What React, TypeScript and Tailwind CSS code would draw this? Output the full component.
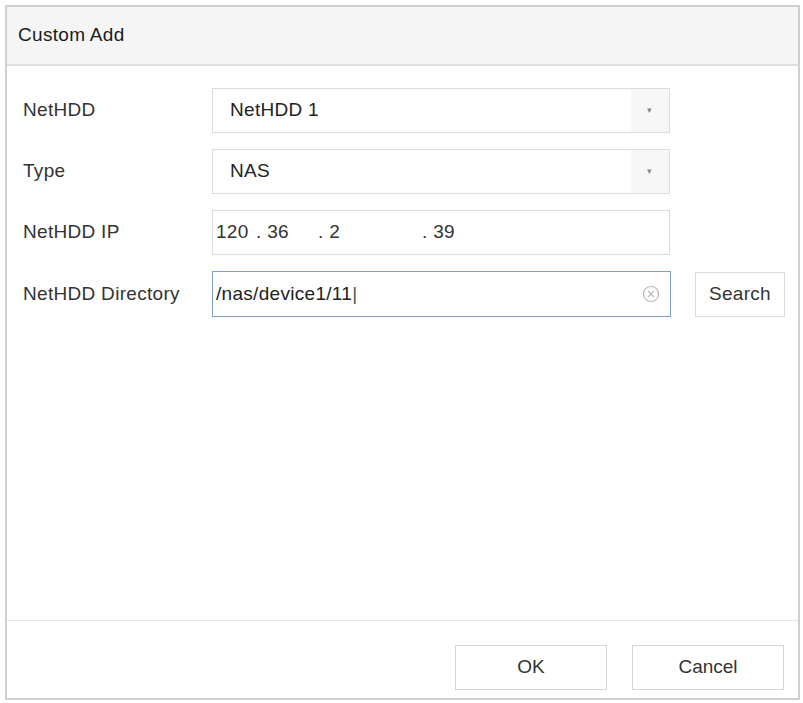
export default function App() {
  const font = { fontFamily: '"Liberation Sans", Arial, sans-serif' };
  const Select = ({ value }: { value: string }) => (
    <div className="flex h-[45px] w-[458px] items-stretch border border-[#dcdcdc] bg-white">
      <span className="flex-1 self-center pl-[17px] text-[19px] tracking-[0.3px] text-[#222]">{value}</span>
      <span className="flex w-[38px] items-center justify-center bg-[#f7f7f7] text-[9px] text-[#888]">▾</span>
    </div>
  );
  return (
    <div style={font} className="h-[703px] w-[803px] bg-white pl-[5px] pr-[3px] pt-[5px] pb-[3px]">
      <div className="flex h-full flex-col border-2 border-[#cfcfcf]">
        <div className="flex h-[59px] items-center border-b-2 border-[#dedede] bg-[#f5f5f5] pl-[11px] text-[19px] tracking-[0.3px] text-[#1a1a1a]">
          Custom Add
        </div>
        <div className="flex flex-1 flex-col gap-[16px] pt-[22px] pl-[16px] text-[19px] tracking-[0.3px] text-[#333]">
          <div className="flex items-center">
            <span className="w-[189px]">NetHDD</span>
            <Select value="NetHDD 1" />
          </div>
          <div className="flex items-center">
            <span className="w-[189px]">Type</span>
            <Select value="NAS" />
          </div>
          <div className="flex items-center">
            <span className="w-[189px]">NetHDD IP</span>
            <div className="flex h-[45px] w-[458px] items-center border border-[#dcdcdc] pl-[3px] text-[19px] text-[#333]">
              <span className="w-[40px]">120</span>
              <span className="w-[62px]">. 36</span>
              <span className="w-[104px]">. 2</span>
              <span>. 39</span>
            </div>
          </div>
          <div className="flex items-center">
            <span className="w-[189px]">NetHDD Directory</span>
            <div className="flex h-[46px] w-[459px] items-center border border-[#7f9fc7] pl-[3px] pr-[10px]">
              <span className="flex-1 text-[19px] text-[#222]">/nas/device1/11<span className="text-[#555]">|</span></span>
              <svg width="18" height="18" viewBox="0 0 18 18" fill="none" stroke="#b8b8b8" strokeWidth="1.2">
                <circle cx="9" cy="9" r="7.5" />
                <path d="M6 6l6 6M12 6l-6 6" />
              </svg>
            </div>
            <button className="ml-[24px] h-[45px] w-[90px] border border-[#dcdcdc] bg-white text-[19px] text-[#333]">Search</button>
          </div>
        </div>
        <div className="flex h-[78px] items-center justify-end gap-[25px] border-t border-[#e6e6e6] pt-[15px] pr-[14px]">
          <button className="h-[45px] w-[152px] border border-[#d6d6d6] bg-white text-[19px] text-[#333]">OK</button>
          <button className="h-[45px] w-[152px] border border-[#d6d6d6] bg-white text-[19px] text-[#333]">Cancel</button>
        </div>
      </div>
    </div>
  );
}
